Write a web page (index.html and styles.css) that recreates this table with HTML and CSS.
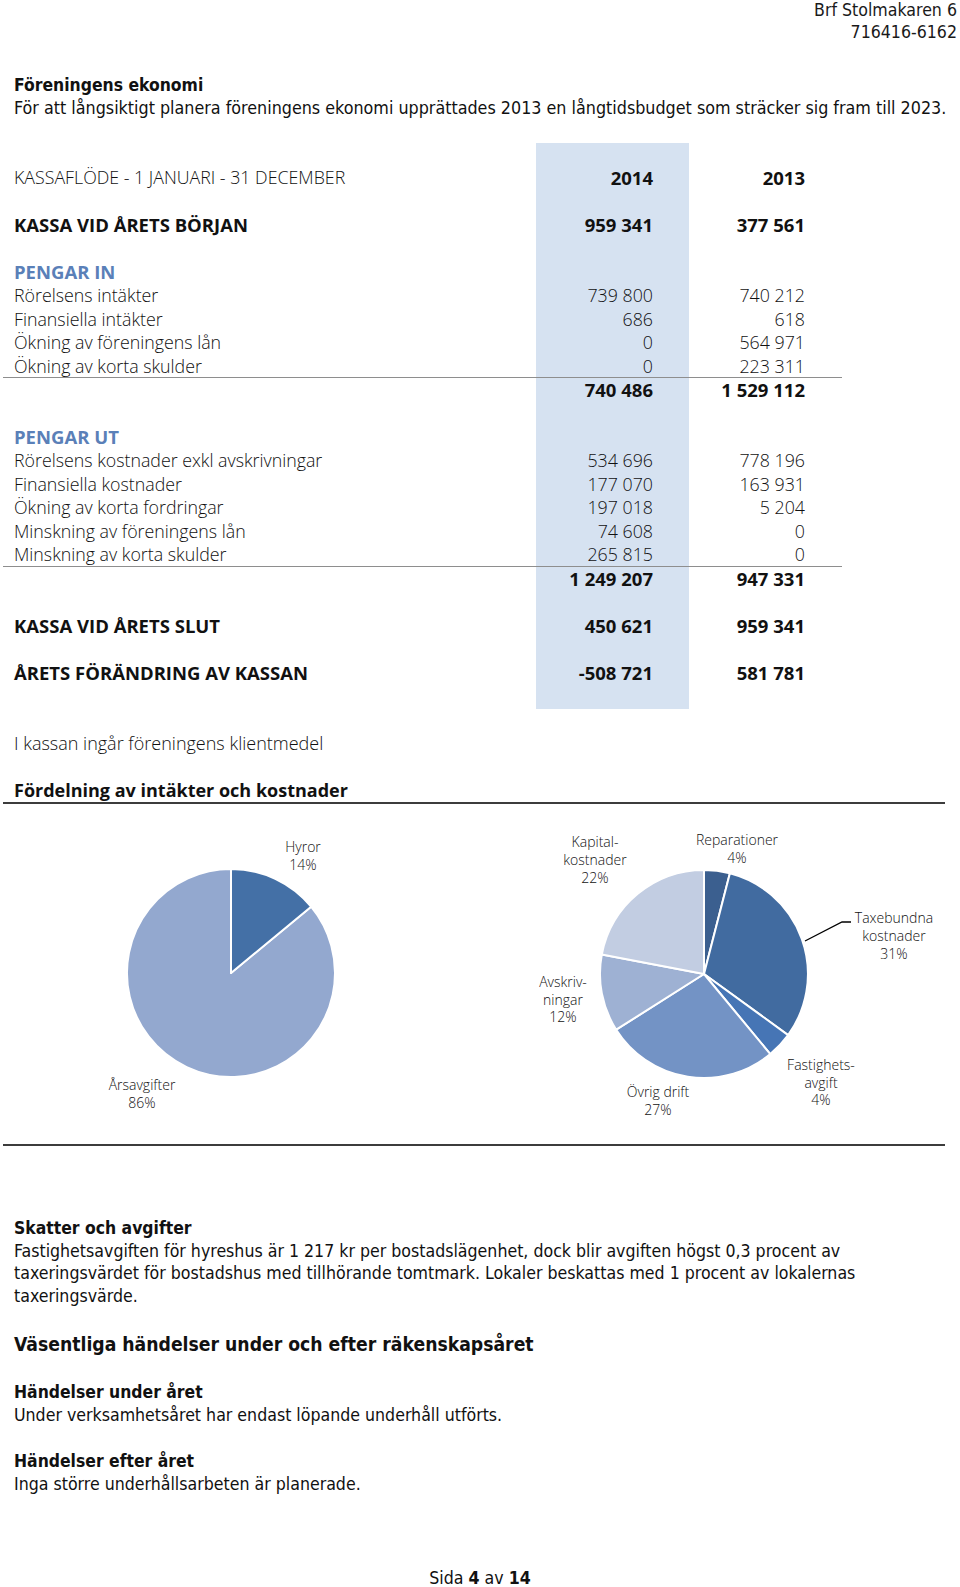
FILE: index.html
```html
<!DOCTYPE html>
<html lang="sv">
<head>
<meta charset="utf-8">
<title>Brf Stolmakaren 6 – Föreningens ekonomi</title>
<link rel="stylesheet" href="styles.css">
</head>
<body>
<div class="page">
  <header class="doc-id">
    <div>Brf Stolmakaren 6</div>
    <div>716416-6162</div>
  </header>

  <section class="intro">
    <h2 class="cond-head">Föreningens ekonomi</h2>
    <p class="cond-text">För att långsiktigt planera föreningens ekonomi upprättades 2013 en långtidsbudget som sträcker sig fram till 2023.</p>
  </section>

  <section class="cashflow">
    <div class="row"><span class="lbl">KASSAFLÖDE - 1 JANUARI - 31 DECEMBER</span><span class="num b">2014</span><span class="num b">2013</span></div>
    <div class="row"></div>
    <div class="row b"><span class="lbl">KASSA VID ÅRETS BÖRJAN</span><span class="num">959 341</span><span class="num">377 561</span></div>
    <div class="row"></div>
    <div class="row"><span class="lbl sec">PENGAR IN</span></div>
    <div class="row"><span class="lbl">Rörelsens intäkter</span><span class="num">739 800</span><span class="num">740 212</span></div>
    <div class="row"><span class="lbl">Finansiella intäkter</span><span class="num">686</span><span class="num">618</span></div>
    <div class="row"><span class="lbl">Ökning av föreningens lån</span><span class="num">0</span><span class="num">564 971</span></div>
    <div class="row rule"><span class="lbl">Ökning av korta skulder</span><span class="num">0</span><span class="num">223 311</span></div>
    <div class="row b"><span class="lbl"></span><span class="num">740 486</span><span class="num">1 529 112</span></div>
    <div class="row"></div>
    <div class="row"><span class="lbl sec">PENGAR UT</span></div>
    <div class="row"><span class="lbl">Rörelsens kostnader exkl avskrivningar</span><span class="num">534 696</span><span class="num">778 196</span></div>
    <div class="row"><span class="lbl">Finansiella kostnader</span><span class="num">177 070</span><span class="num">163 931</span></div>
    <div class="row"><span class="lbl">Ökning av korta fordringar</span><span class="num">197 018</span><span class="num">5 204</span></div>
    <div class="row"><span class="lbl">Minskning av föreningens lån</span><span class="num">74 608</span><span class="num">0</span></div>
    <div class="row rule"><span class="lbl">Minskning av korta skulder</span><span class="num">265 815</span><span class="num">0</span></div>
    <div class="row b"><span class="lbl"></span><span class="num">1 249 207</span><span class="num">947 331</span></div>
    <div class="row"></div>
    <div class="row b"><span class="lbl">KASSA VID ÅRETS SLUT</span><span class="num">450 621</span><span class="num">959 341</span></div>
    <div class="row"></div>
    <div class="row b"><span class="lbl">ÅRETS FÖRÄNDRING AV KASSAN</span><span class="num">-508 721</span><span class="num">581 781</span></div>
  </section>

  <p class="note">I kassan ingår föreningens klientmedel</p>

  <h2 class="chart-title">Fördelning av intäkter och kostnader</h2>

  <div class="charts">
    <svg class="pie" width="471" height="340" viewBox="3 805 471 340" aria-label="Intäkter">
      <g stroke="#fff" stroke-width="2" stroke-linejoin="round">
        <path d="M231,974 L311.1,907.7 A104,104 0 1 1 231,870 Z" fill="#93a8cf"/>
        <path d="M231,974 L231,870 A104,104 0 0 1 311.1,907.7 Z" fill="#4470a6"/>
      </g>
      <g class="lab">
        <text x="303" y="853"><tspan x="303">Hyror</tspan><tspan x="303" dy="17.5">14%</tspan></text>
        <text x="142" y="1091"><tspan x="142">Årsavgifter</tspan><tspan x="142" dy="17.5">86%</tspan></text>
      </g>
    </svg>
    <svg class="pie" width="471" height="340" viewBox="474 805 471 340" aria-label="Kostnader">
      <g stroke="#fff" stroke-width="2" stroke-linejoin="round">
        <path d="M704,975 L704,871 A104,104 0 0 1 729.9,874.3 Z" fill="#3b5f8f"/>
        <path d="M704,975 L729.9,874.3 A104,104 0 0 1 788.1,1036.1 Z" fill="#416ba0"/>
        <path d="M704,975 L788.1,1036.1 A104,104 0 0 1 770.3,1055.1 Z" fill="#4675b5"/>
        <path d="M704,975 L770.3,1055.1 A104,104 0 0 1 616.2,1030.7 Z" fill="#7393c5"/>
        <path d="M704,975 L616.2,1030.7 A104,104 0 0 1 601.8,955.5 Z" fill="#9eb1d3"/>
        <path d="M704,975 L601.8,955.5 A104,104 0 0 1 704,871 Z" fill="#c2cde2"/>
      </g>
      <polyline points="805,942 842,923 851,923" fill="none" stroke="#000" stroke-width="1.3"/>
      <g class="lab">
        <text y="848"><tspan x="595">Kapital-</tspan><tspan x="595" dy="18">kostnader</tspan><tspan x="595" dy="18">22%</tspan></text>
        <text y="846"><tspan x="737">Reparationer</tspan><tspan x="737" dy="17.5">4%</tspan></text>
        <text y="924"><tspan x="894">Taxebundna</tspan><tspan x="894" dy="18">kostnader</tspan><tspan x="894" dy="18">31%</tspan></text>
        <text y="988"><tspan x="563">Avskriv-</tspan><tspan x="563" dy="17.5">ningar</tspan><tspan x="563" dy="17.5">12%</tspan></text>
        <text y="1098"><tspan x="658">Övrig drift</tspan><tspan x="658" dy="18">27%</tspan></text>
        <text y="1071"><tspan x="821">Fastighets-</tspan><tspan x="821" dy="17.5">avgift</tspan><tspan x="821" dy="17.5">4%</tspan></text>
      </g>
    </svg>
  </div>

  <section class="taxes">
    <h3 class="cond-head">Skatter och avgifter</h3>
    <p class="cond-text">Fastighetsavgiften för hyreshus är 1 217 kr per bostadslägenhet, dock blir avgiften högst 0,3 procent av taxeringsvärdet för bostadshus med tillhörande tomtmark. Lokaler beskattas med 1 procent av lokalernas taxeringsvärde.</p>
  </section>

  <section class="events">
    <h2 class="big-head">Väsentliga händelser under och efter räkenskapsåret</h2>
    <h3 class="cond-head ev1">Händelser under året</h3>
    <p class="cond-text">Under verksamhetsåret har endast löpande underhåll utförts.</p>
    <h3 class="cond-head ev2">Händelser efter året</h3>
    <p class="cond-text">Inga större underhållsarbeten är planerade.</p>
  </section>

  <footer class="pager">Sida <b>4</b> av <b>14</b></footer>
</div>
</body>
</html>
```

FILE: styles.css
```css
* { box-sizing: border-box; }

html, body {
  margin: 0;
  padding: 0;
  background: #fff;
}

body {
  color: #111;
  font-family: "DejaVu Sans Condensed", "Liberation Sans", sans-serif;
}

.page {
  width: 960px;
  height: 1587px;
  overflow: hidden;
}

h2, h3, p { margin: 0; font-weight: normal; }

.doc-id {
  padding-right: 3px;
  text-align: right;
  font-size: 17.6px;
  line-height: 21.5px;
  color: #1a1a1a;
}

.cond-head {
  font-weight: 700;
  font-size: 17.4px;
  line-height: 22.5px;
}

.cond-text {
  font-size: 17.6px;
  line-height: 22.5px;
  white-space: nowrap;
}

.intro {
  margin-top: 31px;
  padding-left: 14px;
}

.intro .cond-text { font-size: 17.75px; }

/* Cash flow table */
.cashflow {
  margin-top: 24px;
  margin-left: 3px;
  width: 839px;
  padding: 23.2px 0 24px;
  font-family: "Open Sans", "Noto Sans", sans-serif;
  font-weight: 300;
  font-size: 17.8px;
  background: linear-gradient(to right, transparent 533px, #d6e2f1 533px, #d6e2f1 686px, transparent 686px);
}

.row {
  display: grid;
  grid-template-columns: 533px 153px 153px;
  height: 23.57px;
  line-height: 23.57px;
  white-space: nowrap;
}

.row.rule { box-shadow: inset 0 -1px 0 #8e8e8e; }

.row.b, .b { font-weight: 700; font-size: 18.5px; }

.lbl { padding-left: 11px; }

.sec {
  color: #5a80b8;
  font-weight: 700;
  font-size: 18.5px;
}

.num { text-align: right; }
.row .num:nth-child(2) { padding-right: 36px; }
.row .num:nth-child(3) { padding-right: 37px; }

.note {
  margin-top: 23.5px;
  padding-left: 14px;
  font-family: "Open Sans", "Noto Sans", sans-serif;
  font-weight: 300;
  font-size: 18px;
  line-height: 23.5px;
}

.chart-title {
  margin-top: 22px;
  margin-left: 3px;
  width: 942px;
  padding-left: 11px;
  font-family: "Open Sans", "Noto Sans", sans-serif;
  font-weight: 700;
  font-size: 18px;
  line-height: 24px;
  border-bottom: 2px solid #3c3c3c;
}

.charts {
  display: flex;
  margin-left: 3px;
  width: 942px;
  height: 342px;
  border-bottom: 2px solid #3c3c3c;
}

.pie { display: block; }

.lab text {
  font-family: "Open Sans", "Noto Sans", sans-serif;
  font-weight: 300;
  font-size: 14px;
  fill: #111;
  text-anchor: middle;
}

.taxes {
  margin-top: 70px;
  padding-left: 14px;
}

.taxes .cond-head { line-height: 24px; }
.taxes .cond-text { line-height: 22.6px; width: 880px; white-space: normal; }

.events {
  padding-left: 14px;
}

.big-head {
  margin-top: 24px;
  font-weight: 700;
  font-size: 19.2px;
  line-height: 28px;
}

.ev1 { margin-top: 21.5px; }
.ev2 { margin-top: 23px; }

.events .cond-head, .events .cond-text { line-height: 23px; }

.pager {
  margin-top: 71px;
  text-align: center;
  font-size: 17.6px;
  line-height: 23px;
}
```
